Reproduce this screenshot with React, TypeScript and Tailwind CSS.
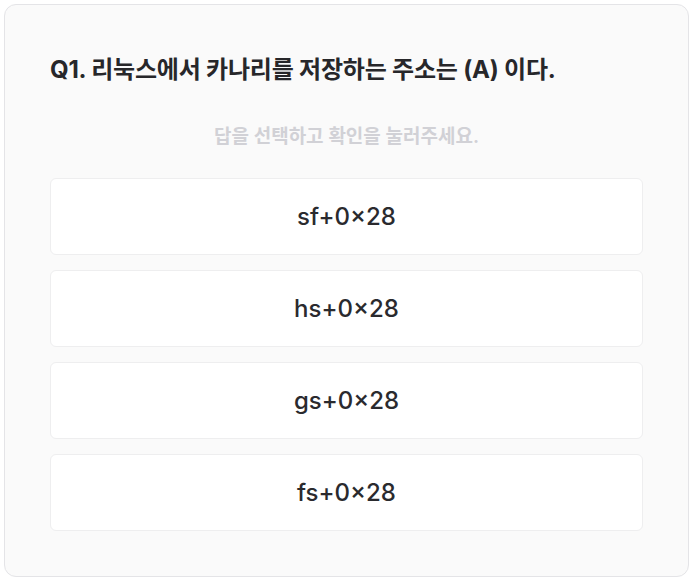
const OPTIONS = ["sf+0×28", "hs+0×28", "gs+0×28", "fs+0×28"];

export default function App() {
  return (
    <div
      className="min-h-screen bg-white p-1"
      style={{ fontFamily: "Inter, 'Noto Sans CJK KR', sans-serif" }}
    >
      <div className="h-[573px] w-[685px] rounded-xl border border-[#e4e4e7] bg-[#fafafa] px-[45px] pt-[49px]">
        <h1 className="text-[24px] leading-[32px] font-bold tracking-[-0.2px] text-[#27272a]">
          Q1. 리눅스에서 카나리를 저장하는 주소는 (A) 이다.
        </h1>
        <p className="mt-[38px] text-center text-[19px] leading-[26px] font-semibold text-[#d1d1d6]">
          답을 선택하고 확인을 눌러주세요.
        </p>
        <div className="mt-[28px] flex flex-col gap-[15px]">
          {OPTIONS.map((o) => (
            <button
              key={o}
              className="flex h-[77px] w-full items-center justify-center rounded-md border border-[#eeeeef] bg-white text-[24px] font-medium text-[#2a2a2e]"
            >
              {o}
            </button>
          ))}
        </div>
      </div>
    </div>
  );
}
